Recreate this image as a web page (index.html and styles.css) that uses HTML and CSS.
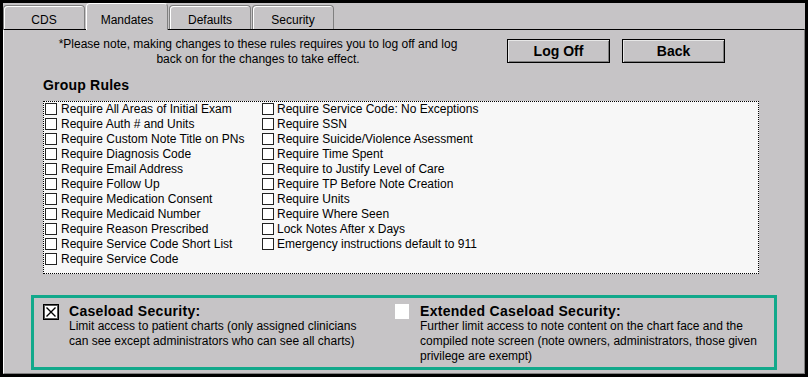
FILE: index.html
```html
<!DOCTYPE html>
<html lang="en">
<head>
  <meta charset="UTF-8" />
  <title>Mandates</title>
  <link rel="stylesheet" href="styles.css">
</head>
<body>

  <div class="window">
    <div class="tabs">
      <div class="tab">CDS</div>
      <div class="tab active">Mandates</div>
      <div class="tab">Defaults</div>
      <div class="tab">Security</div>
    </div>

    <div class="panel">
      <div class="top-row">
        <p class="notice">*Please note, making changes to these rules requires you to log off and log<br>back on for the changes to take effect.</p>
        <button class="btn">Log Off</button>
        <button class="btn">Back</button>
      </div>

      <h3 class="group-title">Group Rules</h3>

      <div class="rules-box">
        <div class="rules-col first">
          <label class="rule"><span class="check"></span>Require All Areas of Initial Exam</label>
          <label class="rule"><span class="check"></span>Require Auth # and Units</label>
          <label class="rule"><span class="check"></span>Require Custom Note Title on PNs</label>
          <label class="rule"><span class="check"></span>Require Diagnosis Code</label>
          <label class="rule"><span class="check"></span>Require Email Address</label>
          <label class="rule"><span class="check"></span>Require Follow Up</label>
          <label class="rule"><span class="check"></span>Require Medication Consent</label>
          <label class="rule"><span class="check"></span>Require Medicaid Number</label>
          <label class="rule"><span class="check"></span>Require Reason Prescribed</label>
          <label class="rule"><span class="check"></span>Require Service Code Short List</label>
          <label class="rule"><span class="check"></span>Require Service Code</label>
        </div>
        <div class="rules-col">
          <label class="rule"><span class="check"></span>Require Service Code: No Exceptions</label>
          <label class="rule"><span class="check"></span>Require SSN</label>
          <label class="rule"><span class="check"></span>Require Suicide/Violence Asessment</label>
          <label class="rule"><span class="check"></span>Require Time Spent</label>
          <label class="rule"><span class="check"></span>Require to Justify Level of Care</label>
          <label class="rule"><span class="check"></span>Require TP Before Note Creation</label>
          <label class="rule"><span class="check"></span>Require Units</label>
          <label class="rule"><span class="check"></span>Require Where Seen</label>
          <label class="rule"><span class="check"></span>Lock Notes After x Days</label>
          <label class="rule"><span class="check"></span>Emergency instructions default to 911</label>
        </div>
      </div>

      <div class="security-box">
        <div class="sec-item left">
          <span class="big-check checked">
            <svg width="16" height="16" viewBox="0 0 16 16">
              <rect x="0.5" y="0.5" width="15" height="15" fill="#fff" stroke="#000"/>
              <rect x="1.5" y="1.5" width="13" height="13" fill="none" stroke="#555"/>
              <path d="M3.5 3.5 L12.5 12.5 M12.5 3.5 L3.5 12.5" stroke="#000" stroke-width="1.4"/>
            </svg>
          </span>
          <div class="sec-text">
            <div class="sec-title">Caseload Security:</div>
            <div class="sec-desc">Limit access to patient charts (only assigned clinicians<br>can see except administrators who can see all charts)</div>
          </div>
        </div>
        <div class="sec-item">
          <span class="big-check blank"></span>
          <div class="sec-text">
            <div class="sec-title">Extended Caseload Security:</div>
            <div class="sec-desc">Further limit access to note content on the chart face and the<br>compiled note screen (note owners, administrators, those given<br>privilege are exempt)</div>
          </div>
        </div>
      </div>
    </div>
  </div>

</body>
</html>
```
FILE: styles.css
```css
:root {
  --panel-grey: #c6c4c6;
  --shadow-grey: #808080;
  --teal: #12a98b;
}

* {
  margin: 0;
  padding: 0;
  box-sizing: border-box;
  font-family: 'Liberation Sans', Arial, sans-serif;
}

body {
  background: #000;
  color: #000;
}

.window {
  width: 808px;
  height: 377px;
  border: 3px solid #000;
  background: var(--panel-grey);
  display: flex;
  flex-direction: column;
}

.tabs {
  display: flex;
  align-items: flex-end;
  gap: 1px;
  height: 26px;
}

.tab {
  width: 82px;
  height: 24px;
  padding-top: 7px;
  font-size: 12px;
  line-height: 14px;
  text-align: center;
  background: var(--panel-grey);
  border: 1px solid var(--shadow-grey);
  border-bottom: none;
  border-radius: 4px 4px 0 0;
  box-shadow: inset 1px 1px 0 #fff;
}

.tab.active {
  height: 27px;
  padding-top: 9px;
  margin-bottom: -1px;
  position: relative;
  z-index: 1;
  border-color: #fff var(--shadow-grey) transparent #fff;
  box-shadow: none;
}

.panel {
  flex: 1;
  border-top: 1px solid #000;
  border-left: 1px solid #fff;
  border-right: 1px solid var(--shadow-grey);
  border-bottom: 1px solid var(--shadow-grey);
  padding: 7px 0 0 0;
}

.top-row {
  display: flex;
  align-items: flex-start;
}

.notice {
  width: 440px;
  margin-left: 34px;
  font-size: 12px;
  line-height: 15px;
  text-align: center;
}

.btn {
  width: 103px;
  height: 24px;
  margin-top: 2px;
  margin-left: 29px;
  font-size: 14px;
  font-weight: bold;
  background: var(--panel-grey);
  color: #000;
  border: 1px solid #000;
  box-shadow: inset 1px 1px 0 #e6e6e6, inset -1px -1px 0 var(--shadow-grey);
}

.btn + .btn {
  margin-left: 12px;
}

.group-title {
  margin: 10px 0 0 39px;
  font-size: 14px;
  line-height: 16px;
  font-weight: bold;
  letter-spacing: 0.2px;
}

.rules-box {
  width: 716px;
  height: 173px;
  margin: 8px 0 0 39px;
  border: 1px dotted #000;
  background: #f7f7f7;
  display: flex;
  padding-left: 1px;
}

.rules-col {
  display: flex;
  flex-direction: column;
  margin-top: -1px;
}

.rules-col.first {
  width: 217px;
}

.rule {
  height: 15px;
  display: flex;
  align-items: center;
  font-size: 12px;
}

.check {
  width: 12px;
  height: 12px;
  border: 1px solid #222;
  background: #fff;
  margin-right: 4px;
  flex-shrink: 0;
}

.rules-col:not(.first) .check {
  margin-right: 3px;
}

.security-box {
  width: 746px;
  height: 75px;
  margin: 21px 0 0 27px;
  border: 3px solid var(--teal);
  padding: 5px 0 0 9px;
  display: flex;
}

.sec-item {
  display: flex;
  align-items: flex-start;
}

.sec-item.left {
  width: 352px;
}

.big-check {
  width: 16px;
  height: 16px;
  margin-top: 1px;
  margin-right: 10px;
  flex-shrink: 0;
}

.big-check svg {
  display: block;
}

.big-check.blank {
  width: 14px;
  height: 15px;
  background: #fff;
  margin-right: 11px;
}

.sec-title {
  font-size: 14px;
  line-height: 16px;
  font-weight: bold;
  letter-spacing: 0.3px;
}

.sec-desc {
  font-size: 12px;
  line-height: 15px;
}
```
